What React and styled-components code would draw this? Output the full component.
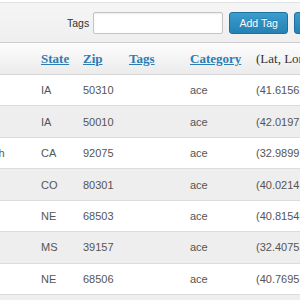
import React from 'react';
import styled, { createGlobalStyle } from 'styled-components';

const Global = createGlobalStyle`
  html, body { margin: 0; padding: 0; background: #fff; overflow: hidden; }
  body { font-family: "Liberation Sans", Arial, sans-serif; }
`;

const Page = styled.div`
  width: 300px;
  height: 300px;
  overflow: hidden;
`;

const Toolbar = styled.div`
  margin-top: 2px;
  height: 39px;
  border-top: 1px solid #e3e3e3;
  border-bottom: 1px solid #cdcdcd;
  background: linear-gradient(#f5f5f5, #efefef);
  display: flex;
  align-items: center;
  padding-left: 67px;
  white-space: nowrap;
`;

const Label = styled.label`
  font-size: 10.5px;
  color: #333;
  margin-right: 4px;
`;

const Input = styled.input`
  box-sizing: border-box;
  width: 130px;
  height: 22px;
  border: 1px solid #c4c4c4;
  border-radius: 2px;
  background: #fff;
  box-shadow: inset 0 1px 2px rgba(0,0,0,0.08);
  margin: 0 6px 0 0;
  padding: 0 4px;
  flex-shrink: 0;
`;

const Button = styled.button`
  box-sizing: border-box;
  flex-shrink: 0;
  height: 22px;
  width: ${p => p.$w}px;
  margin-right: 6px;
  padding: 0;
  border: 1px solid #1d6f9c;
  border-radius: 3px;
  background: linear-gradient(#3a9ccf, #2581b3);
  color: #fff;
  font-family: "Liberation Sans", Arial, sans-serif;
  font-size: 10.5px;
  text-shadow: 0 -1px 0 rgba(0,0,0,0.2);
`;

const TableWrap = styled.div`
  overflow: hidden;
`;

const Grid = styled.div`
  margin-left: -72px;
  width: 520px;
`;

const cols = '105px 42px 46px 61px 66px 200px';

const HeadRow = styled.div`
  display: grid;
  grid-template-columns: ${cols};
  height: 32px;
  box-sizing: border-box;
  align-items: center;
  border-bottom: 1px solid #d6d6d6;
  background: linear-gradient(#fdfdfd, #ebebeb);
`;

const HeadCell = styled.div`
  padding-left: 8px;
  font-family: "Liberation Serif", "Times New Roman", serif;
  font-size: 13px;
  white-space: nowrap;
  ${p => p.$link
    ? 'color: #2b7db4; font-weight: bold; text-decoration: underline;'
    : 'color: #333;'}
`;

const Row = styled.div`
  display: grid;
  grid-template-columns: ${cols};
  height: 31.45px;
  box-sizing: border-box;
  align-items: center;
  border-bottom: 1px solid #dcdcdc;
  background: ${p => (p.$alt ? '#eeeeee' : '#ffffff')};
`;

const Cell = styled.div`
  padding-left: 8px;
  font-size: 11px;
  color: #555;
  white-space: nowrap;
`;

const rows = [
  ['Des Moines', 'IA', '50310', '', 'ace', '(41.615620, -93.633540)'],
  ['Ames', 'IA', '50010', '', 'ace', '(42.019750, -93.612160)'],
  ['Solana Beach', 'CA', '92075', '', 'ace', '(32.989910, -117.26012)'],
  ['Boulder', 'CO', '80301', '', 'ace', '(40.021410, -105.21850)'],
  ['Lincoln', 'NE', '68503', '', 'ace', '(40.815480, -96.678230)'],
  ['Ridgeland', 'MS', '39157', '', 'ace', '(32.407530, -90.132640)'],
  ['Lincoln', 'NE', '68506', '', 'ace', '(40.769570, -96.645020)'],
  ['Omaha', 'NE', '68102', '', 'ace', '(41.258620, -95.937680)'],
];

export default function App() {
  return (
    <Page>
      <Global />
      <Toolbar>
        <Label>Tags</Label>
        <Input type="text" />
        <Button $w={59}>Add Tag</Button>
        <Button $w={70}>Remove Tag</Button>
      </Toolbar>
      <TableWrap>
        <Grid>
          <HeadRow>
            <HeadCell $link>City</HeadCell>
            <HeadCell $link>State</HeadCell>
            <HeadCell $link>Zip</HeadCell>
            <HeadCell $link>Tags</HeadCell>
            <HeadCell $link>Category</HeadCell>
            <HeadCell>(Lat, Long)</HeadCell>
          </HeadRow>
          {rows.map((r, i) => (
            <Row key={i} $alt={i % 2 === 1}>
              {r.map((c, j) => (
                <Cell key={j}>{c}</Cell>
              ))}
            </Row>
          ))}
        </Grid>
      </TableWrap>
    </Page>
  );
}
